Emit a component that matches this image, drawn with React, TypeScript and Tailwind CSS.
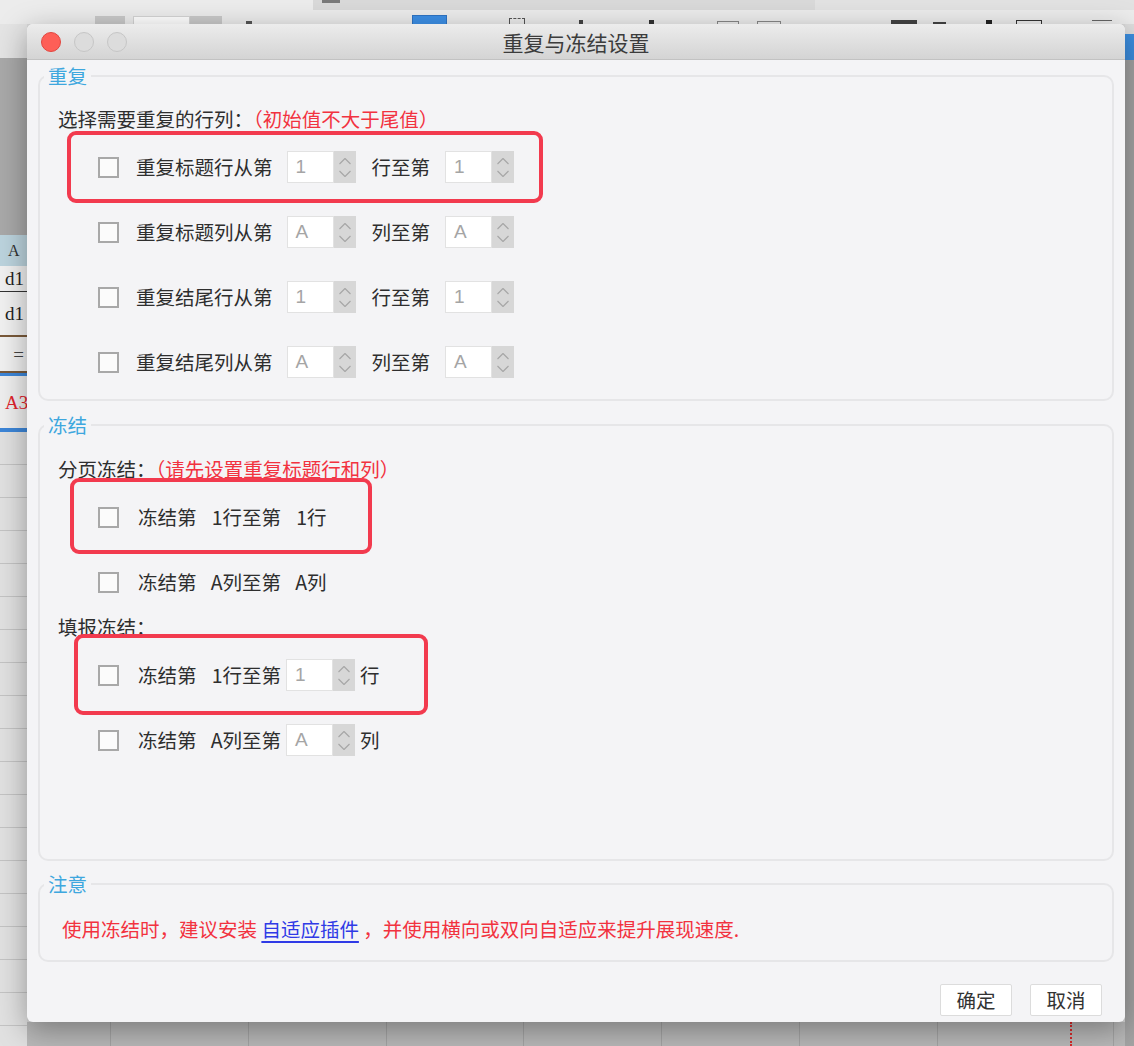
import React from "react";

// Repeat & freeze settings dialog, shown over a dimmed spreadsheet window.

const CJK = "font-['Noto_Sans_CJK_SC','Noto_Sans',sans-serif]";

function Chevron({ up }: { up?: boolean }) {
  return (
    <svg width="14" height="8" viewBox="0 0 14 8" fill="none">
      <polyline
        points={up ? "1.5,7 7,1.5 12.5,7" : "1.5,1 7,6.5 12.5,1"}
        stroke="#a6a6a6"
        strokeWidth="1.1"
        strokeLinejoin="round"
      />
    </svg>
  );
}

function NumberBox({ value }: { value: string }) {
  return (
    <div className="flex shrink-0">
      <div className="h-[32px] w-[47px] border border-[#e2e2e2] bg-white pl-[8px] font-['Liberation_Sans',sans-serif] text-[19px] leading-[30px] text-[#a5a5a5]">
        {value}
      </div>
      <div className="flex h-[32px] w-[22px] flex-col items-center justify-center gap-[5px] bg-[#d7d7d7]">
        <Chevron up />
        <Chevron />
      </div>
    </div>
  );
}

function Checkbox() {
  return <div className="h-[21px] w-[21px] shrink-0 border-2 border-[#a8a8a8] bg-[#fbfbfb]" />;
}

function Highlight({ className }: { className: string }) {
  return <div className={`pointer-events-none absolute rounded-[9px] border-[4px] border-[#f23a4e] ${className}`} />;
}

function RepeatRow({ label, unit, value, highlight }: { label: string; unit: string; value: string; highlight?: boolean }) {
  return (
    <div className="relative ml-[40px] flex h-[32px] items-center">
      {highlight && <Highlight className="left-[-31px] top-[-20px] h-[72px] w-[476px]" />}
      <Checkbox />
      <span className="ml-[17px] mr-[14px] whitespace-nowrap">{label}</span>
      <NumberBox value={value} />
      <span className="ml-[16px] mr-[15px] whitespace-nowrap">{unit}至第</span>
      <NumberBox value={value} />
    </div>
  );
}

function Num({ v }: { v: string }) {
  return <span className="inline-block w-[26px] text-right">{v}</span>;
}

function Section({ title, children }: { title: string; children: React.ReactNode }) {
  return (
    <fieldset className="rounded-[10px] border-2 border-[#e6e6e8]">
      <legend className="ml-[4px] px-[4px] text-[19.5px] leading-[28px] text-[#3ea7de]">{title}</legend>
      {children}
    </fieldset>
  );
}

function Dialog() {
  return (
    <div
      className={`absolute left-[27px] top-[24px] flex h-[998px] w-[1098px] flex-col overflow-hidden rounded-[6px] bg-[#f4f4f6] shadow-[0_8px_30px_rgba(0,0,0,0.35)] ${CJK}`}
    >
      <div className="grid h-[36px] shrink-0 grid-cols-[1fr_auto_1fr] items-center border-b border-[#c2c2c2] bg-gradient-to-b from-[#ececec] to-[#d4d4d4]">
        <div className="flex gap-[13px] pl-[14px]">
          <div className="h-[20px] w-[20px] rounded-full border border-[#e2463f] bg-[#fe5f57]" />
          <div className="h-[20px] w-[20px] rounded-full border border-[#c6c6c6] bg-[#dcdcdc]" />
          <div className="h-[20px] w-[20px] rounded-full border border-[#c6c6c6] bg-[#dcdcdc]" />
        </div>
        <div className="text-[21px] leading-[28px] text-[#3c3c3c]">重复与冻结设置</div>
        <div />
      </div>

      <div className="flex flex-1 flex-col px-[11px] pt-[2px] text-[19.5px] leading-[28px] text-[#2e2e2e]">
        <Section title="重复">
          <div className="pb-[21px] pl-[18px] pt-[15px]">
            <div>
              选择需要重复的行列：<span className="text-[#f2323f]">（初始值不大于尾值）</span>
            </div>
            <div className="mt-[18px] flex flex-col gap-[33px]">
              <RepeatRow label="重复标题行从第" unit="行" value="1" highlight />
              <RepeatRow label="重复标题列从第" unit="列" value="A" />
              <RepeatRow label="重复结尾行从第" unit="行" value="1" />
              <RepeatRow label="重复结尾列从第" unit="列" value="A" />
            </div>
          </div>
        </Section>

        <div className="mt-[10px]">
          <Section title="冻结">
            <div className="pb-[103px] pl-[18px] pt-[16px]">
              <div>
                分页冻结：<span className="text-[#f2323f]">（请先设置重复标题行和列）</span>
              </div>
              <div className="mt-[18px] flex flex-col gap-[33px]">
                <div className="relative ml-[40px] flex h-[32px] items-center">
                  <Highlight className="left-[-28px] top-[-23px] h-[76px] w-[302px]" />
                  <Checkbox />
                  <span className="ml-[19px] whitespace-nowrap">
                    冻结第<Num v="1" />行至第<Num v="1" />行
                  </span>
                </div>
                <div className="ml-[40px] flex h-[32px] items-center">
                  <Checkbox />
                  <span className="ml-[19px] whitespace-nowrap">
                    冻结第<Num v="A" />列至第<Num v="A" />列
                  </span>
                </div>
              </div>
              <div className="mt-[15px]">填报冻结：</div>
              <div className="mt-[18px] flex flex-col gap-[33px]">
                <div className="relative ml-[40px] flex h-[32px] items-center">
                  <Highlight className="left-[-24px] top-[-25px] h-[81px] w-[354px]" />
                  <Checkbox />
                  <span className="ml-[19px] mr-[5px] whitespace-nowrap">
                    冻结第<Num v="1" />行至第
                  </span>
                  <NumberBox value="1" />
                  <span className="ml-[5px]">行</span>
                </div>
                <div className="ml-[40px] flex h-[32px] items-center">
                  <Checkbox />
                  <span className="ml-[19px] mr-[5px] whitespace-nowrap">
                    冻结第<Num v="A" />列至第
                  </span>
                  <NumberBox value="A" />
                  <span className="ml-[5px]">列</span>
                </div>
              </div>
            </div>
          </Section>
        </div>

        <div className="mt-[9px]">
          <Section title="注意">
            <div className="whitespace-pre pb-[17px] pl-[22px] pt-[17px] text-[#f2323f]">
              使用冻结时，建议安装 <span className="text-[#2f3ae6] underline decoration-[#2f3ae6] decoration-2 underline-offset-[4px]">自适应插件</span> ，并使用横向或双向自适应来提升展现速度.
            </div>
          </Section>
        </div>

        <div className="mt-[22px] flex justify-end gap-[18px] pr-[12px]">
          <button className="h-[32px] w-[72px] rounded-[2px] border border-[#dcdcdc] bg-white text-[19.5px] text-[#333]">确定</button>
          <button className="h-[32px] w-[72px] rounded-[2px] border border-[#dcdcdc] bg-white text-[19.5px] text-[#333]">取消</button>
        </div>
      </div>
    </div>
  );
}

function LeftSheet() {
  return (
    <div className="flex w-[27px] shrink-0 flex-col overflow-hidden font-['Liberation_Serif',serif] text-[19px] leading-none">
      <div className="h-[34px] shrink-0 bg-[#e4e4e4]" />
      <div className="h-[177px] shrink-0 bg-[#a9a9a9]" />
      <div className="flex h-[31px] shrink-0 items-center bg-[#bcd4de] pl-[8px] text-[16px] text-[#333]">A</div>
      <div className="flex h-[26px] shrink-0 items-center border-b border-[#333] bg-[#f1f1f1] pl-[5px] text-[#222]">d1</div>
      <div className="flex h-[45px] shrink-0 items-center border-b-2 border-[#7a5a3a] bg-[#f1f1f1] pl-[5px] text-[#222]">d1</div>
      <div className="flex h-[36px] shrink-0 items-center justify-end border-b-2 border-[#7a5a3a] bg-[#f1f1f1] pr-[3px] text-[#444]">=</div>
      <div className="h-[3px] shrink-0 bg-[#3d86d8]" />
      <div className="flex h-[52px] shrink-0 items-center bg-[#efefef] pl-[5px] text-[#e0242c]">A3</div>
      <div className="h-[4px] shrink-0 bg-[#3d86d8]" />
      {Array.from({ length: 19 }).map((_, i) => (
        <div key={i} className="h-[33px] shrink-0 border-b border-[#c4c4c4] bg-[#e1e1e1]" />
      ))}
    </div>
  );
}

function BottomSheet() {
  const widths = [84, 138, 138, 137, 138, 138, 138, 134, 42];
  return (
    <div className="flex h-[24px] bg-[#b9b9b9]">
      {widths.map((w, i) => (
        <div
          key={i}
          className={i === 7 ? "h-full shrink-0 border-r-2 border-dotted border-[#d82a2a]" : "h-full shrink-0 border-r border-[#a4a4a4]"}
          style={{ width: w }}
        />
      ))}
    </div>
  );
}

export default function App() {
  return (
    <div className="relative h-[1046px] w-[1134px] overflow-hidden bg-[#bdbdbd]">
      <div className="flex h-[10px]">
        <div className="w-[313px] bg-[#ececec]" />
        <div className="flex w-[502px] bg-[#d9d9d9]">
          <div className="ml-[9px] h-[3px] w-[18px] bg-[#7a7a7a]" />
        </div>
        <div className="flex-1 bg-[#e2e2e2]" />
      </div>
      <div className="flex h-[14px] items-end bg-[#ececec]">
        <div className="ml-[95px] h-[8px] w-[30px] bg-[#c9c9c9]" />
        <div className="ml-[8px] h-[8px] w-[57px] border border-b-0 border-[#d4d4d4] bg-white" />
        <div className="h-[8px] w-[32px] bg-[#c9c9c9]" />
        <div className="ml-[24px] h-[3px] w-[6px] bg-[#555]" />
        <div className="ml-[160px] h-[9px] w-[35px] border border-b-0 border-[#2f74c4] bg-[#3d8fe6]" />
        <div className="ml-[62px] h-[6px] w-[16px] border border-dashed border-b-0 border-[#555]" />
        <div className="ml-[54px] h-[4px] w-[4px] bg-[#444]" />
        <div className="ml-[66px] h-[4px] w-[5px] bg-[#333]" />
        <div className="ml-[63px] h-[3px] w-[22px] border border-b-0 border-[#888]" />
        <div className="ml-[18px] h-[3px] w-[24px] border border-b-0 border-[#888]" />
        <div className="ml-[110px] h-[4px] w-[26px] bg-[#444]" />
        <div className="ml-[16px] h-[2px] w-[13px] bg-[#444]" />
        <div className="ml-[40px] h-[4px] w-[6px] bg-[#222]" />
        <div className="ml-[24px] h-[4px] w-[26px] border border-b-0 border-[#333]" />
        <div className="ml-[50px] h-[4px] w-[20px] border-t border-[#666]" />
      </div>
      <div className="flex h-[1022px]">
        <LeftSheet />
        <div className="flex w-[1098px] shrink-0 flex-col">
          <div className="h-[998px] shrink-0 bg-[#d8d8d8]" />
          <BottomSheet />
        </div>
        <div className="flex flex-1 flex-col">
          <div className="h-[10px] shrink-0 bg-[#dedede]" />
          <div className="h-[26px] shrink-0 bg-[#3c8ee0]" />
          <div className="flex-1 bg-[#a4a4a4]" />
        </div>
      </div>
      <Dialog />
    </div>
  );
}
